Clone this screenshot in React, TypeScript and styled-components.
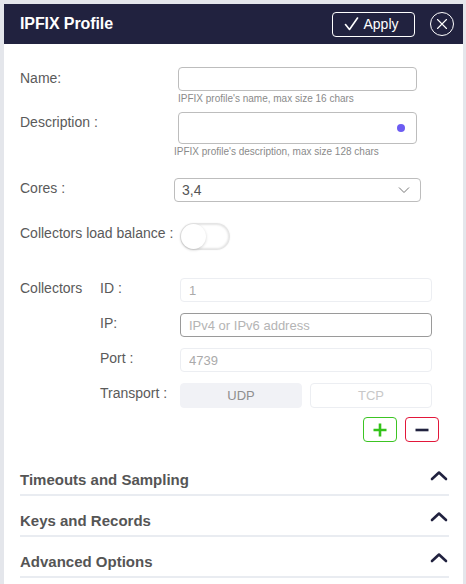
import React from "react";
import styled, { createGlobalStyle } from "styled-components";

const Global = createGlobalStyle`
  html, body { margin: 0; padding: 0; }
  body { font-family: "Liberation Sans", Arial, sans-serif; background: #e4e6eb; }
  * { box-sizing: border-box; }
`;

const Frame = styled.div`
  width: 466px;
  height: 584px;
  padding: 4px 3px 0 4px;
  background: #e4e6eb;
  overflow: hidden;
`;

const Panel = styled.div`
  background: #fff;
  height: 100%;
  display: flex;
  flex-direction: column;
`;

const Header = styled.div`
  height: 40px;
  background: #21223f;
  display: flex;
  align-items: center;
  padding: 0 9px 0 16px;
`;

const Title = styled.h1`
  margin: 0;
  flex: 1;
  color: #fff;
  font-size: 16px;
  font-weight: 700;
  letter-spacing: -0.1px;
`;

const ApplyButton = styled.button`
  width: 83px;
  height: 25px;
  border: 1px solid #fff;
  border-radius: 4px;
  background: transparent;
  color: #fff;
  font-family: inherit;
  font-size: 14px;
  display: flex;
  align-items: center;
  justify-content: center;
  gap: 4px;
  padding: 0 4px 0 0;
  margin-right: 15px;
`;

const CloseButton = styled.button`
  width: 24px;
  height: 24px;
  border: 1px solid #fff;
  border-radius: 50%;
  background: transparent;
  display: flex;
  align-items: center;
  justify-content: center;
  padding: 0;
`;

const Body = styled.div`
  padding: 23px 14px 0 16px;
  display: flex;
  flex-direction: column;
`;

const Row = styled.div<{ $mt?: number }>`
  display: grid;
  grid-template-columns: 158px 1fr;
  align-items: start;
  margin-top: ${(p) => p.$mt ?? 0}px;
`;

const Label = styled.label<{ $pt?: number }>`
  color: #5a5a5a;
  font-size: 14px;
  line-height: 17px;
  padding-top: ${(p) => p.$pt ?? 2}px;
  white-space: nowrap;
`;

const FieldCol = styled.div<{ $ml?: number }>`
  display: flex;
  flex-direction: column;
  margin-left: ${(p) => p.$ml ?? 0}px;
`;

const TextInput = styled.input<{ $w: number; $h: number; $tone?: "normal" | "dim" | "strong" }>`
  width: ${(p) => p.$w}px;
  height: ${(p) => p.$h}px;
  border: 1px solid
    ${(p) => (p.$tone === "dim" ? "#eceef2" : p.$tone === "strong" ? "#9a9a9a" : "#bdbdbd")};
  border-radius: 4px;
  padding: 0 8px;
  font-family: inherit;
  font-size: 13px;
  color: #aaa;
  background: #fff;
  outline: none;
  &::placeholder { color: #b4b4b4; }
`;

const DescBox = styled.div`
  position: relative;
  width: 239px;
  height: 32px;
  border: 1px solid #bdbdbd;
  border-radius: 4px;
`;

const Dot = styled.span`
  position: absolute;
  right: 11px;
  top: 11px;
  width: 8px;
  height: 8px;
  border-radius: 50%;
  background: #6c5cf2;
`;

const Helper = styled.div<{ $ml?: number }>`
  color: #8a8a8a;
  font-size: 10px;
  line-height: 12px;
  margin-top: 2px;
  margin-left: ${(p) => p.$ml ?? 0}px;
  white-space: nowrap;
`;

const Select = styled.div`
  width: 247px;
  height: 24px;
  border: 1px solid #bdbdbd;
  border-radius: 4px;
  display: flex;
  align-items: center;
  justify-content: space-between;
  padding: 0 10px 0 7px;
  color: #555;
  font-size: 14px;
`;

const Toggle = styled.div`
  width: 50px;
  height: 27px;
  margin-left: 2px;
  border-radius: 14px;
  background: #fff;
  box-shadow: 0 0 2px 2px #e4e4e4 inset, 0 0 2px rgba(0,0,0,0.05);
  position: relative;
`;

const Knob = styled.span`
  position: absolute;
  left: 1px;
  top: 1px;
  width: 25px;
  height: 25px;
  border-radius: 50%;
  background: #fff;
  box-shadow: 0 1px 3px rgba(0,0,0,0.18);
`;

const Collectors = styled.div`
  display: grid;
  grid-template-columns: 80px 80px 252px;
  grid-auto-rows: 24px;
  row-gap: 11px;
  margin-top: 28px;
  align-items: center;
`;

const SubLabel = styled.span<{ $col: number }>`
  grid-column: ${(p) => p.$col};
  color: #5a5a5a;
  font-size: 14px;
  line-height: 17px;
  margin-top: -4px;
  white-space: nowrap;
`;

const TransportGroup = styled.div`
  display: grid;
  grid-template-columns: 122px 122px;
  column-gap: 8px;
  height: 25px;
`;

const TransportButton = styled.button<{ $active?: boolean }>`
  height: 25px;
  border-radius: 4px;
  border: 1px solid ${(p) => (p.$active ? "#f1f2f6" : "#eceef2")};
  background: ${(p) => (p.$active ? "#f1f2f6" : "#fff")};
  color: ${(p) => (p.$active ? "#8f8f8f" : "#c8c8c8")};
  font-family: inherit;
  font-size: 13px;
  padding: 0;
`;

const ActionRow = styled.div`
  display: flex;
  justify-content: flex-end;
  gap: 8px;
  margin-top: 10px;
  padding-right: 10px;
`;

const IconButton = styled.button<{ $color: string }>`
  width: 34px;
  height: 25px;
  border: 1px solid ${(p) => p.$color};
  border-radius: 4px;
  background: #fff;
  display: flex;
  align-items: center;
  justify-content: center;
  padding: 0;
`;

const Sections = styled.div`
  margin-top: 13px;
  display: flex;
  flex-direction: column;
`;

const Section = styled.div`
  display: flex;
  justify-content: space-between;
  align-items: flex-start;
  padding: 16px 0 5px 0;
  border-bottom: 2px solid #e9ecf1;
`;

const SectionTitle = styled.span`
  color: #555;
  font-size: 15px;
  line-height: 18px;
  font-weight: 700;
`;

const Caret = styled.svg`
  margin-top: -1px;
  margin-right: 1px;
`;

const CaretUp = () => (
  <Caret width="18" height="11" viewBox="0 0 18 11">
    <polyline points="2,9 9,2.5 16,9" fill="none" stroke="#21223f" strokeWidth="2.6" strokeLinecap="round" strokeLinejoin="round" />
  </Caret>
);

export default function App() {
  return (
    <>
      <Global />
      <Frame>
        <Panel>
          <Header>
            <Title>IPFIX Profile</Title>
            <ApplyButton>
              <svg width="15" height="14" viewBox="0 0 15 14">
                <polyline points="1.5,7.5 5.5,12.5 13.5,1" fill="none" stroke="#fff" strokeWidth="1.6" strokeLinecap="round" strokeLinejoin="round" />
              </svg>
              Apply
            </ApplyButton>
            <CloseButton>
              <svg width="12" height="12" viewBox="0 0 12 12">
                <path d="M1.5 1.5 L10.5 10.5 M10.5 1.5 L1.5 10.5" stroke="#fff" strokeWidth="1.1" strokeLinecap="round" />
              </svg>
            </CloseButton>
          </Header>
          <Body>
            <Row>
              <Label $pt={3}>Name:</Label>
              <FieldCol>
                <TextInput $w={239} $h={24} defaultValue="" />
                <Helper>IPFIX profile's name, max size 16 chars</Helper>
              </FieldCol>
            </Row>
            <Row $mt={7}>
              <Label $pt={2}>Description :</Label>
              <FieldCol>
                <DescBox>
                  <Dot />
                </DescBox>
                <Helper $ml={-4}>IPFIX profile's description, max size 128 chars</Helper>
              </FieldCol>
            </Row>
            <Row $mt={20}>
              <Label $pt={2}>Cores :</Label>
              <FieldCol $ml={-4}>
                <Select>
                  <span>3,4</span>
                  <svg width="12" height="8" viewBox="0 0 12 8">
                    <polyline points="1,1.5 6,6.5 11,1.5" fill="none" stroke="#777" strokeWidth="1" />
                  </svg>
                </Select>
              </FieldCol>
            </Row>
            <Row $mt={21}>
              <Label $pt={2}>Collectors load balance :</Label>
              <FieldCol>
                <Toggle>
                  <Knob />
                </Toggle>
              </FieldCol>
            </Row>
            <Collectors>
              <SubLabel $col={1}>Collectors</SubLabel>
              <SubLabel $col={2}>ID :</SubLabel>
              <TextInput $w={252} $h={24} $tone="dim" defaultValue="1" />
              <SubLabel $col={2}>IP:</SubLabel>
              <TextInput $w={252} $h={24} $tone="strong" placeholder="IPv4 or IPv6 address" />
              <SubLabel $col={2}>Port :</SubLabel>
              <TextInput $w={252} $h={24} $tone="dim" defaultValue="4739" />
              <SubLabel $col={2}>Transport :</SubLabel>
              <TransportGroup>
                <TransportButton $active>UDP</TransportButton>
                <TransportButton>TCP</TransportButton>
              </TransportGroup>
            </Collectors>
            <ActionRow>
              <IconButton $color="#3cc423">
                <svg width="16" height="16" viewBox="0 0 16 16">
                  <path d="M8 1.5 V14.5 M1.5 8 H14.5" stroke="#33c21a" strokeWidth="2.6" />
                </svg>
              </IconButton>
              <IconButton $color="#e2173a">
                <svg width="16" height="16" viewBox="0 0 16 16">
                  <path d="M1.5 8 H14.5" stroke="#21223f" strokeWidth="2.6" />
                </svg>
              </IconButton>
            </ActionRow>
            <Sections>
              <Section>
                <SectionTitle>Timeouts and Sampling</SectionTitle>
                <CaretUp />
              </Section>
              <Section>
                <SectionTitle>Keys and Records</SectionTitle>
                <CaretUp />
              </Section>
              <Section>
                <SectionTitle>Advanced Options</SectionTitle>
                <CaretUp />
              </Section>
            </Sections>
          </Body>
        </Panel>
      </Frame>
    </>
  );
}
